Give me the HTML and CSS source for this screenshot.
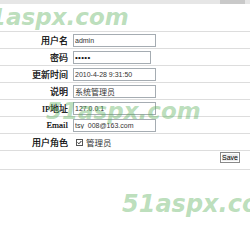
FILE: index.html
```html
<!DOCTYPE html>
<html lang="zh-CN">

<head>
    <meta charset="UTF-8">
    <meta name="viewport" content="width=device-width, initial-scale=1.0">
    <title>用户信息</title>
    <link rel="stylesheet" href="styles.css">
</head>

<body>
    <div class="topbar"><span class="thumb"></span></div>
    <table class="form">
        <tr>
            <td class="label">用户名</td>
            <td><input class="text" type="text" value="admin"></td>
        </tr>
        <tr>
            <td class="label">密码</td>
            <td><input class="text short" type="password" value="12345"></td>
        </tr>
        <tr>
            <td class="label">更新时间</td>
            <td><input class="text" type="text" value="2010-4-28 9:31:50"></td>
        </tr>
        <tr>
            <td class="label">说明</td>
            <td><input class="text cjk" type="text" value="系统管理员"></td>
        </tr>
        <tr>
            <td class="label">IP地址</td>
            <td><input class="text" type="text" value="127.0.0.1"></td>
        </tr>
        <tr>
            <td class="label">Email</td>
            <td><input class="text" type="text" value="tsy_008@163.com"></td>
        </tr>
        <tr>
            <td class="label">用户角色</td>
            <td>
                <span class="role">
                    <svg class="check" width="7" height="7" viewBox="0 0 7 7">
                        <rect x="0.5" y="0.5" width="6" height="6" fill="#fff" stroke="#555" />
                        <polyline points="1.6,3.4 2.9,4.8 5.4,2" fill="none" stroke="#222" stroke-width="1" />
                    </svg>
                    管理员
                </span>
            </td>
        </tr>
        <tr class="actions">
            <td colspan="2"><button class="save">Save</button></td>
        </tr>
    </table>

    <!-- 水印 -->
    <span class="mark mark-top">51aspx.com</span>
    <span class="mark mark-mid">51aspx.com</span>
    <span class="mark mark-bottom">51aspx.com</span>
</body>

</html>
```

FILE: styles.css
```css
body {
    margin: 0;
    background-color: #ffffff;
    font-family: 'Liberation Serif', 'Noto Sans CJK SC', serif;
    color: #000000;
    position: relative;
    height: 230px;
    overflow: hidden;
}

.topbar {
    height: 4px;
    background-color: #e6e6e6;
    display: flex;
    justify-content: flex-end;
    padding-right: 5px;
}

.thumb {
    width: 25px;
    height: 4px;
    background-color: #c9c9c9;
}

.form {
    width: 100%;
    margin-top: 27px;
    border-collapse: collapse;
    border-top: 1px solid #dddddd;
}

.form td {
    height: 16px;
    padding: 0;
    border-bottom: 1px solid #dddddd;
    vertical-align: middle;
}

.form td.label {
    width: 68px;
    padding-right: 4px;
    text-align: right;
    font-size: 9px;
    white-space: nowrap;
    -webkit-text-stroke: 0.2px #000000;
}

.text {
    box-sizing: border-box;
    width: 83px;
    height: 13px;
    margin: 0 0 0 1px;
    padding: 0 1px;
    border: 1px solid #a5acb2;
    font-family: 'Liberation Sans', Arial, sans-serif;
    font-size: 7px;
    line-height: 11px;
    color: #333333;
    display: block;
}

.text.short {
    width: 78px;
    font-size: 8px;
    letter-spacing: 0.3px;
    color: #111111;
}

.text.cjk {
    font-family: 'Noto Sans CJK SC', sans-serif;
    font-size: 8px;
}

.role {
    display: flex;
    align-items: center;
    gap: 3px;
    margin-left: 4px;
    font-family: 'Noto Sans CJK SC', sans-serif;
    font-size: 8.5px;
    color: #333333;
}

.actions td {
    height: 14px;
    text-align: right;
    padding-right: 10px;
}

.save {
    height: 11px;
    padding: 0 1px;
    border: 1px solid #8a8a8a;
    box-shadow: inset 0 0 0 1px #ffffff;
    background-color: #ececec;
    font-family: 'Liberation Sans', Arial, sans-serif;
    font-size: 7px;
    line-height: 9px;
    color: #000000;
    display: inline-block;
    vertical-align: top;
    margin-top: 1px;
}

.mark {
    position: absolute;
    font-family: 'DejaVu Sans', sans-serif;
    font-weight: bold;
    font-style: oblique;
    font-size: 23px;
    line-height: 23px;
    color: rgba(80, 170, 80, 0.4);
    white-space: nowrap;
    pointer-events: none;
}

.mark-top {
    left: -26px;
    top: 6px;
}

.mark-mid {
    left: 46px;
    top: 100px;
}

.mark-bottom {
    left: 122px;
    top: 193px;
    font-size: 24px;
}
```
